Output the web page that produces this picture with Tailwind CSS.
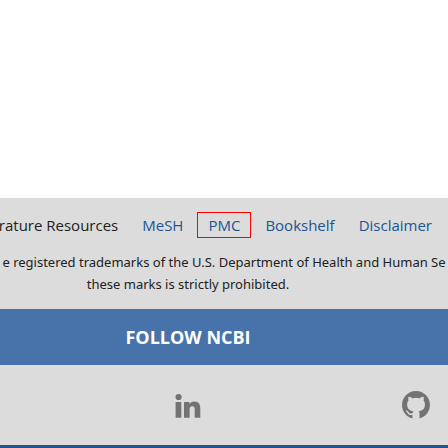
<!DOCTYPE html>
<html lang="en">
<head>
<meta charset="utf-8">
<meta name="viewport" content="width=device-width, initial-scale=1">
<title>NCBI</title>
<script src="https://cdn.jsdelivr.net/npm/@tailwindcss/browser@4"></script>
</head>
<body class="flex min-h-screen flex-col overflow-hidden bg-white font-['Open_Sans','Noto_Sans',sans-serif] text-[#212121]">
<main class="grow"></main>
<footer class="border-b-3 border-[#205493] bg-[#dcdcdc]">
  <nav aria-label="Literature Resources" class="flex items-center justify-end overflow-hidden pt-3.5 pr-4 text-[15px] leading-6 whitespace-nowrap text-[#205493]">
    <h2 class="mr-6 text-[#212121]">Literature Resources</h2>
    <a href="#mesh" class="mr-3.5">MeSH</a>
    <a href="#pmc" class="mr-3.5 border border-[#ff0000] px-2.5">PMC</a>
    <a href="#bookshelf" class="mr-6">Bookshelf</a>
    <a href="#disclaimer">Disclaimer</a>
  </nav>
  <div class="overflow-hidden pt-[13px] pb-3.5 font-['Noto_Sans','Open_Sans',sans-serif] text-[13px] leading-[22px] whitespace-nowrap">
    <p class="flex justify-center">e registered trademarks of the U.S. Department of Health and Human Se</p>
    <p class="pr-[72px] text-center">these marks is strictly prohibited.</p>
  </div>
  <h2 class="bg-[#4773aa] py-4 pr-[72px] text-center text-lg leading-6 font-bold text-white">FOLLOW NCBI</h2>
  <div class="flex h-20 items-center justify-between pr-[18px] pl-[174px]">
    <a href="#linkedin" aria-label="LinkedIn"><svg class="h-7 w-7" viewBox="0 0 28 28" fill="#737373"><circle cx="4.6" cy="6" r="3.1"/><path d="M1.6 11h5.7v15.8H1.6zM10 11h5.4v2.1c1-1.6 2.7-2.5 4.9-2.5 4.6 0 6 3 6 7.2v9h-5.6v-8.2c0-2-.4-3.4-2.4-3.4-2.1 0-2.7 1.5-2.7 3.5v8.1H10z"/></svg></a>
    <a href="#github" aria-label="GitHub"><svg class="h-7 w-7" viewBox="0 0 16 16" fill="#737373"><path d="M8 0C3.58 0 0 3.58 0 8c0 3.54 2.29 6.53 5.47 7.59.4.07.55-.17.55-.38 0-.19-.01-.82-.01-1.49-2.01.37-2.53-.49-2.69-.94-.09-.23-.48-.94-.82-1.13-.28-.15-.68-.52-.01-.53.63-.01 1.08.58 1.23.82.72 1.21 1.87.87 2.33.66.07-.52.28-.87.51-1.07-1.78-.2-3.64-.89-3.64-3.95 0-.87.31-1.59.82-2.15-.08-.2-.36-1.02.08-2.12 0 0 .67-.21 2.2.82a7.42 7.42 0 0 1 4 0c1.53-1.04 2.2-.82 2.2-.82.44 1.1.16 1.92.08 2.12.51.56.82 1.27.82 2.15 0 3.07-1.87 3.75-3.65 3.95.29.25.54.73.54 1.48 0 1.07-.01 1.93-.01 2.2 0 .21.15.46.55.38A8.01 8.01 0 0 0 16 8c0-4.42-3.58-8-8-8z"/></svg></a>
  </div>
</footer>
</body>
</html>
